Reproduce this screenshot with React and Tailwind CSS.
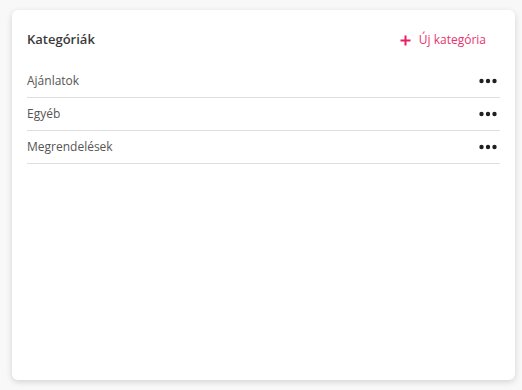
import React from "react";

const categories = ["Ajánlatok", "Egyéb", "Megrendelések"];

function Dots() {
  return (
    <svg width="18" height="6" viewBox="0 0 18 6" className="text-[#1f1f1f]">
      <circle cx="2.5" cy="3" r="2.2" fill="currentColor" />
      <circle cx="9" cy="3" r="2.2" fill="currentColor" />
      <circle cx="15.5" cy="3" r="2.2" fill="currentColor" />
    </svg>
  );
}

export default function App() {
  return (
    <div className="w-[522px] h-[390px] bg-[#f8f8f8] pt-[10px] pl-[12px] pr-[7px] pb-[10px] font-['Open_Sans',sans-serif]">
      <div className="h-[370px] bg-white rounded-[6px] shadow-[0_2px_6px_rgba(0,0,0,0.15)] px-[15px] pt-[15px]">
        {/* header */}
        <div className="h-[30px] flex items-center justify-between">
          <h2 className="text-[13px] font-semibold text-[#3b3b3b]">Kategóriák</h2>
          <button className="flex items-center gap-[8px] pr-[14px] text-[12px] text-[#e8336f]">
            <svg width="11" height="11" viewBox="0 0 11 11">
              <path d="M5.5 0.5v10M0.5 5.5h10" stroke="#e91e63" strokeWidth="2" />
            </svg>
            Új kategória
          </button>
        </div>

        {/* list */}
        <ul className="mt-[10px]">
          {categories.map((c) => (
            <li
              key={c}
              className="h-[33px] flex items-center justify-between border-b border-[#dedede]"
            >
              <span className="text-[12px] text-[#555]">{c}</span>
              <span className="pr-[3px]">
                <Dots />
              </span>
            </li>
          ))}
        </ul>
      </div>
    </div>
  );
}
